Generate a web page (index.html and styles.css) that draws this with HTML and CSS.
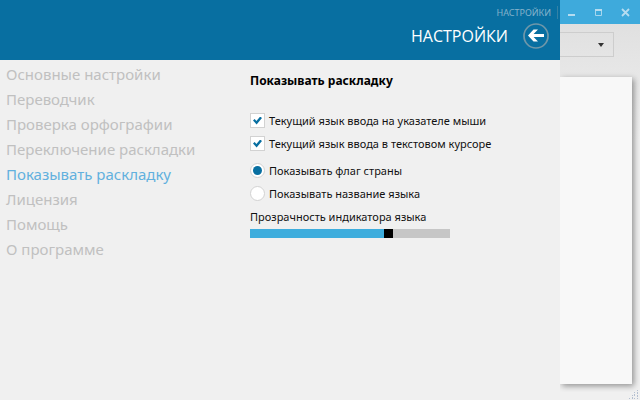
FILE: index.html
```html
<!DOCTYPE html>
<html lang="ru">
<head>
<meta charset="utf-8">
<title>Настройки</title>
<link rel="stylesheet" href="styles.css">
</head>
<body>
<div class="window">
  <section class="panel">
    <header class="header">
      <div class="header-top"><a class="top-link" href="#settings">НАСТРОЙКИ</a></div>
      <div class="header-main">
        <h1 class="title">НАСТРОЙКИ</h1>
        <button class="back" type="button" aria-label="Назад">
          <svg width="26" height="26" viewBox="0 0 26 26" aria-hidden="true">
            <circle cx="13" cy="13" r="12" fill="none" stroke="#6f97a9" stroke-width="1.7"/>
            <path d="M5 12.5 10.5 6.5H15L10.6 11H21V14H10.6L15 18.5H10.5Z" fill="#fff"/>
          </svg>
        </button>
      </div>
    </header>
    <div class="body">
      <nav class="menu">
        <a href="#general">Основные настройки</a>
        <a href="#translator">Переводчик</a>
        <a href="#spelling">Проверка орфографии</a>
        <a href="#switching">Переключение раскладки</a>
        <a class="active" href="#layout">Показывать раскладку</a>
        <a href="#license">Лицензия</a>
        <a href="#help">Помощь</a>
        <a href="#about">О программе</a>
      </nav>
      <form class="settings">
        <h2 class="heading">Показывать раскладку</h2>
        <label class="option"><input type="checkbox" checked>Текущий язык ввода на указателе мыши</label>
        <label class="option"><input type="checkbox" checked>Текущий язык ввода в текстовом курсоре</label>
        <div class="radios">
          <label class="option"><input type="radio" name="show" checked>Показывать флаг страны</label>
          <label class="option"><input type="radio" name="show">Показывать название языка</label>
        </div>
        <label class="slider-label" for="opacity">Прозрачность индикатора языка</label>
        <input class="slider" id="opacity" type="range" min="0" max="100" value="70">
      </form>
    </div>
  </section>
  <aside class="backdrop">
    <div class="controls">
      <button type="button" aria-label="Свернуть"><svg width="9" height="9" viewBox="0 0 9 9"><path d="M1 7H8" stroke="#b5dcf0" stroke-width="2"/></svg></button>
      <button type="button" aria-label="Развернуть"><svg width="9" height="9" viewBox="0 0 9 9"><path d="M1.5 1V7.5H7.5V1" fill="none" stroke="#a6d6ee"/><path d="M1 2H8" stroke="#b5dcf0" stroke-width="2"/></svg></button>
      <button type="button" aria-label="Закрыть"><svg width="9" height="9" viewBox="0 0 9 9"><path d="M1 1 8 8M8 1 1 8" stroke="#b5dcf0" stroke-width="1.8"/></svg></button>
    </div>
    <button class="dropdown" type="button" aria-label="Язык"><svg width="6" height="4" viewBox="0 0 6 4"><path d="M0 0H6L3 4Z" fill="#333"/></svg></button>
    <div class="page"></div>
    <div class="status">
      <svg width="11" height="11" viewBox="0 0 11 11" aria-hidden="true"><path d="M8 1h1v1H8zM5 3h1v1H5zM8 3h1v2H8zM3 6h1v1H3zM5 5h1v2H5zM8 6h1v2H8zM0 9h1v1H0zM3 8h1v2H3zM5 9h1v1H5zM8 9h1v1H8z" fill="#b4bfd0"/></svg>
    </div>
  </aside>
</div>
</body>
</html>
```
FILE: styles.css
```css
* { box-sizing: border-box; }
body {
  margin: 0;
  font-family: "Noto Sans", "Open Sans", sans-serif;
  font-size: 11px;
  color: #111;
  background: #f0f0f0;
}
button { border: 0; padding: 0; background: none; }
svg { display: block; }
a { color: inherit; text-decoration: none; }
.window {
  display: grid;
  grid-template-columns: minmax(0, 1fr) 80px;
  min-height: 100vh;
}
.panel { background: #f0f0f0; }
.header { background: #086fa1; color: #fff; height: 60px; }
.header-top {
  display: flex;
  justify-content: flex-end;
  padding: 6px 2px 0 0;
}
.top-link {
  padding-right: 6px;
  border-right: 1px solid #3482a6;
  color: #84b3cb;
  font-size: 9px;
  line-height: 13px;
}
.header-main {
  display: flex;
  justify-content: flex-end;
  align-items: center;
  gap: 15px;
  padding: 4px 11px 0 0;
}
.title { margin: 0; font-family: "Open Sans", "Noto Sans", sans-serif; font-size: 16px; font-weight: 400; line-height: 26px; }
.body { display: grid; grid-template-columns: 250px minmax(0, 1fr); }
.menu {
  display: flex;
  flex-direction: column;
  padding: 2px 6px;
  font-size: 15px;
  line-height: 25px;
  color: #c0c0c0;
}
.menu .active { color: #62b0de; }
.settings { display: flex; flex-direction: column; align-items: flex-start; padding-top: 12px; }
.heading { margin: 0 0 19px; font-size: 12px; line-height: 18px; color: #000; }
.option { display: flex; align-items: center; gap: 4px; height: 23px; }
.option input {
  appearance: none;
  display: grid;
  place-items: center;
  width: 15px;
  height: 15px;
  margin: 0;
  background: #fff;
  border: 1px solid #d2d2d2;
}
.option input[type="checkbox"]:checked::before {
  content: "";
  width: 9px;
  height: 8px;
  background: #086fa1;
  clip-path: polygon(0 50%, 18% 32%, 38% 55%, 80% 0, 100% 18%, 40% 100%);
}
.option input[type="radio"] { border-radius: 50%; }
.option input[type="radio"]:checked::before {
  content: "";
  width: 9px;
  height: 9px;
  border-radius: 50%;
  background: #086fa1;
}
.radios { padding: 4px 0 3px; }
.slider-label { line-height: 18px; }
.slider {
  appearance: none;
  width: 200px;
  height: 9px;
  margin: 3px 0 0;
  background: linear-gradient(to right, #3eaddd 70%, #c6c6c6 70%);
}
.slider::-webkit-slider-thumb { appearance: none; width: 9px; height: 9px; background: #000; }
.backdrop {
  display: flex;
  flex-direction: column;
  align-items: flex-start;
  background: linear-gradient(#e0e0e0 24px, #f0f0f0 140px);
}
.controls {
  display: flex;
  align-items: center;
  align-self: stretch;
  gap: 18px;
  height: 24px;
  padding-left: 7px;
  background: #3eaadc;
}
.dropdown {
  display: flex;
  align-items: center;
  justify-content: flex-end;
  width: 54px;
  height: 25px;
  margin-top: 8px;
  padding-right: 9px;
  border: 1px solid #cdcdcd;
  border-left: 0;
}
.page {
  flex: 1;
  width: 72px;
  margin-top: 20px;
  background: #f8f8f8;
  box-shadow: 2px 2px 6px rgba(0, 0, 0, 0.4);
  clip-path: inset(-6px -8px -8px 0);
}
.status {
  display: flex;
  align-self: stretch;
  align-items: flex-end;
  justify-content: flex-end;
  height: 16px;
}
```
